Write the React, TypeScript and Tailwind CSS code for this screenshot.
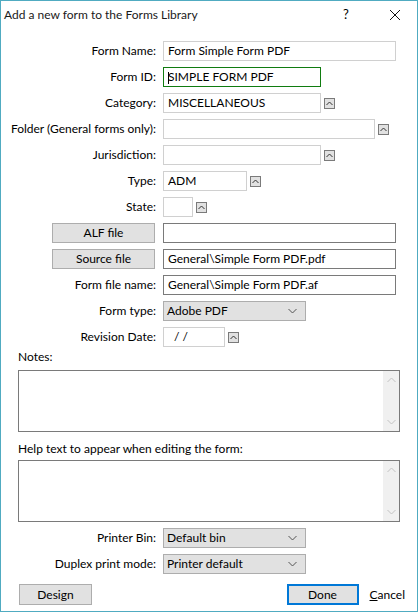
import React from "react";

function SpinUp() {
  return (
    <div className="ml-[3px] w-[11px] h-[11px] border border-[#7a7a7a] bg-[#e1e1e1] flex items-center justify-center">
      <svg width="7" height="5" viewBox="0 0 7 5">
        <path d="M0.5 4 L3.5 1 L6.5 4" fill="none" stroke="#333" strokeWidth="1" />
      </svg>
    </div>
  );
}

function Chevron({ down, color }: { down?: boolean; color: string }) {
  return (
    <svg width="9" height="6" viewBox="0 0 9 6">
      <path d={down ? "M0.5 1 L4.5 5 L8.5 1" : "M0.5 5 L4.5 1 L8.5 5"} fill="none" stroke={color} strokeWidth="1" />
    </svg>
  );
}

function Row({ label, children }: { label: React.ReactNode; children: React.ReactNode }) {
  return (
    <div className="flex items-center h-[20px]">
      <div className="w-[155px] flex justify-end items-center shrink-0 whitespace-nowrap">{label}</div>
      <div className="ml-[7px] flex items-center">{children}</div>
    </div>
  );
}

function Edit({ w, value, dark, cls }: { w: string; value?: string; dark?: boolean; cls?: string }) {
  return (
    <div
      className={
        "h-[20px] flex items-center bg-white border whitespace-nowrap " +
        (dark ? "border-[#7a7a7a] " : "border-[#d0d0d0] ") +
        w +
        " " +
        (cls || "pl-[4px]")
      }
    >
      {value}
    </div>
  );
}

function Combo({ value }: { value: string }) {
  return (
    <div className="w-[143px] h-[20px] flex items-center justify-between pl-[3px] pr-[8px] bg-[#e1e1e1] border border-[#adadad]">
      <span>{value}</span>
      <Chevron down color="#555" />
    </div>
  );
}

function Memo() {
  return (
    <div className="mx-[17px] h-[62px] border border-[#7a7a7a] bg-white flex justify-end">
      <div className="w-[16px] h-full bg-[#f0f0f0] flex flex-col items-center justify-between py-[6px]">
        <Chevron color="#c2c2c2" />
        <Chevron down color="#c2c2c2" />
      </div>
    </div>
  );
}

export default function App() {
  return (
    <div
      className="w-[418px] h-[612px] bg-white border border-[#50abc1] text-[12px] text-black flex flex-col"
      style={{ fontFamily: 'Lato, "Noto Sans", sans-serif' }}
    >
      <div className="h-[27px] flex items-center pl-[3px]">
        <span className="flex-1 text-[#1a1a1a]">Add a new form to the Forms Library</span>
        <span className="w-[10px] text-[13px] mr-[36px]">?</span>
        <svg width="12" height="12" viewBox="0 0 12 12" className="mr-[16px]">
          <path d="M1 1 L11 11 M11 1 L1 11" stroke="#111" strokeWidth="1" />
        </svg>
      </div>

      <div className="mt-[13px] flex flex-col gap-[6px]">
        <Row label="Form Name:">
          <Edit w="w-[233px]" value="Form Simple Form PDF" />
        </Row>
        <Row label="Form ID:">
          <div className="w-[158px] h-[20px] flex items-center pl-[4px] border border-[#107c10] relative">
            <span className="absolute left-[4px] top-[4px] w-px h-[12px] bg-black" />
            SIMPLE FORM PDF
          </div>
        </Row>
        <Row label="Category:">
          <Edit w="w-[158px]" value="MISCELLANEOUS" />
          <SpinUp />
        </Row>
        <Row label="Folder (General forms only):">
          <Edit w="w-[212px]" />
          <SpinUp />
        </Row>
        <Row label="Jurisdiction:">
          <Edit w="w-[158px]" />
          <SpinUp />
        </Row>
        <Row label="Type:">
          <Edit w="w-[84px]" value="ADM" />
          <SpinUp />
        </Row>
        <Row label="State:">
          <Edit w="w-[30px]" />
          <SpinUp />
        </Row>
        <Row
          label={
            <div className="mr-[1px] w-[103px] h-[20px] flex items-center justify-center bg-[#e1e1e1] border border-[#adadad]">
              ALF file
            </div>
          }
        >
          <Edit w="w-[233px]" dark />
        </Row>
        <Row
          label={
            <div className="mr-[1px] w-[103px] h-[20px] flex items-center justify-center bg-[#e1e1e1] border border-[#adadad]">
              Source file
            </div>
          }
        >
          <Edit w="w-[233px]" dark value="General\Simple Form PDF.pdf" />
        </Row>
        <Row label="Form file name:">
          <Edit w="w-[233px]" dark value="General\Simple Form PDF.af" />
        </Row>
        <Row label="Form type:">
          <Combo value="Adobe PDF" />
        </Row>
        <Row label="Revision Date:">
          <Edit w="w-[62px]" value="/ /" cls="pl-[10px]" />
          <SpinUp />
        </Row>
      </div>

      <div className="mt-[2px] pl-[17px] h-[16px] leading-[16px]">Notes:</div>
      <div className="mt-[5px]">
        <Memo />
      </div>

      <div className="mt-[9px] pl-[17px] h-[16px] leading-[16px]">Help text to appear when editing the form:</div>
      <div className="mt-[3px]">
        <Memo />
      </div>

      <div className="mt-[6px] flex flex-col gap-[6px]">
        <Row label="Printer Bin:">
          <Combo value="Default bin" />
        </Row>
        <Row label="Duplex print mode:">
          <Combo value="Printer default" />
        </Row>
      </div>

      <div className="mt-[10px] flex items-center pl-[18px]">
        <div className="w-[73px] h-[21px] flex items-center justify-center bg-[#e1e1e1] border border-[#adadad]">Design</div>
        <div className="flex-1" />
        <div className="w-[72px] h-[21px] flex items-center justify-center bg-[#e1e1e1] border-2 border-[#0078d7]">Done</div>
        <div className="ml-[11px] mr-[12px]">
          <span className="underline">C</span>ancel
        </div>
      </div>
    </div>
  );
}
